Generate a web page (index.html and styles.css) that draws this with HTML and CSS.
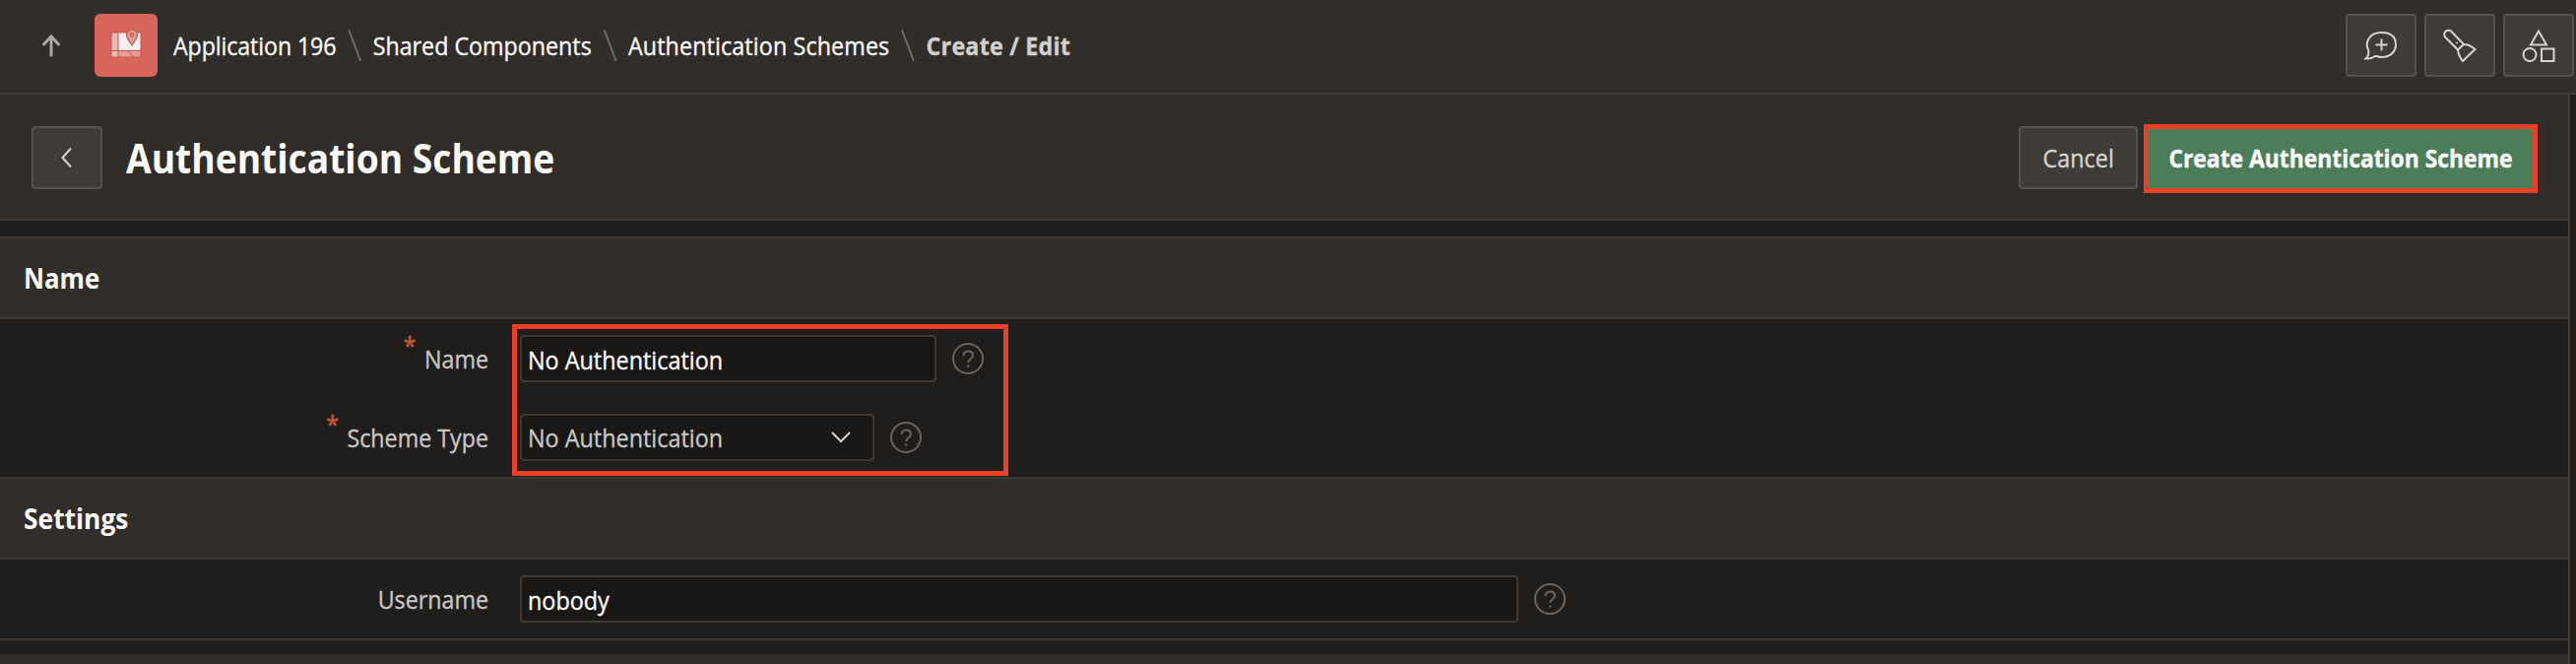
FILE: index.html
```html
<!DOCTYPE html>
<html lang="en">
<head>
<meta charset="utf-8">
<title>Authentication Scheme</title>
<link rel="stylesheet" href="styles.css">
</head>
<body>
<header class="topbar">
  <svg class="up" width="22" height="26" viewBox="0 0 22 26"><path d="M11 23V4M3.500 12L11 4l7.500 8"/></svg>
  <div class="app-icon">
    <svg width="34" height="36" viewBox="0 0 34 36">
      <path class="map-light" d="M2 8h30v25H2z"/>
      <path class="map-white" d="M9 8h23v18H9z"/>
      <path class="map-mid" d="M9 27h23v6H9z"/>
      <path class="map-line" d="M9 8v25M2 26.500h30M19 27l6 6M2 8h30v25H2z"/>
      <path class="pin" d="M23 21c-3-5-5.500-7.500-5.500-10.500a5.500 5.500 0 0 1 11 0C28.500 13.500 26 16 23 21z"/>
      <circle class="pin" cx="23" cy="10.500" r="1.800"/>
    </svg>
  </div>
  <nav class="crumbs">
    <a class="crumb-app">Application 196</a>
    <svg class="sep" width="16" height="34" viewBox="0 0 16 34"><path d="M1.500 1l13 32"/></svg>
    <a>Shared Components</a>
    <svg class="sep" width="16" height="34" viewBox="0 0 16 34"><path d="M1.500 1l13 32"/></svg>
    <a class="crumb-parent">Authentication Schemes</a>
    <svg class="sep" width="16" height="34" viewBox="0 0 16 34"><path d="M1.500 1l13 32"/></svg>
    <strong>Create / Edit</strong>
  </nav>
  <div class="tools">
    <button class="btn square"><svg width="36" height="36" viewBox="0 0 36 36"><path d="M5 22.500C1.500 15 6 5 18.500 5S33 12 33 17.500s-4 12.500-14.500 12.500c-2.500 0-4-.5-6-1.200C9.500 31 6.500 32 2.500 31.500c3-2.500 3.500-5 2.500-9zM18.500 11.500v12M12.500 17.500h12"/></svg></button>
    <button class="btn square"><svg width="36" height="36" viewBox="0 0 36 36"><path d="M3 9.500a4.300 4.300 0 0 1 7-5L22 17l-6 5.500zM22 17c5 0 8 2 11.500 5L21 34c-2.500-3-4.500-6-5-11.500"/><circle class="dot" cx="15" cy="15.500" r="1"/></svg></button>
    <button class="btn square"><svg width="36" height="36" viewBox="0 0 36 36"><path d="M18 3.500l8 14H10zM21 21.500h12.500V34H21z"/><circle cx="9" cy="27.500" r="6.500"/></svg></button>
  </div>
</header>
<main class="page">
  <section class="titlebar">
    <button class="btn square"><svg width="14" height="22" viewBox="0 0 14 22"><path d="M11 1.500L2.500 11l8.500 9.500"/></svg></button>
    <h1>Authentication Scheme</h1>
    <button class="btn cancel"><span class="narrow">Cancel</span></button>
    <button class="create"><span class="narrow">Create Authentication Scheme</span></button>
  </section>
  <section class="region first">
    <h2><span class="narrow">Name</span></h2>
    <div class="fields two">
      <label><span class="req">*</span>Name</label>
      <div class="control"><div class="input name"><span class="narrow">No Authentication</span></div><svg class="help" width="32" height="32" viewBox="0 0 32 32"><circle cx="16" cy="16" r="15"/><path d="M11.500 13c0-6 9.500-6 9.500-.5 0 4-4.700 3.500-4.700 7.500"/><circle class="dot" cx="16.200" cy="23.500" r="1.200"/></svg></div>
      <label><span class="req">*</span>Scheme Type</label>
      <div class="control"><div class="input select"><span class="narrow">No Authentication</span><svg width="20" height="12" viewBox="0 0 20 12"><path d="M1 1l9 9 9-9"/></svg></div><svg class="help" width="32" height="32" viewBox="0 0 32 32"><circle cx="16" cy="16" r="15"/><path d="M11.500 13c0-6 9.500-6 9.500-.5 0 4-4.700 3.500-4.700 7.500"/><circle class="dot" cx="16.200" cy="23.500" r="1.200"/></svg></div>
      <div class="highlight"></div>
    </div>
  </section>
  <section class="region">
    <h2><span class="narrow settings">Settings</span></h2>
    <div class="fields">
      <label>Username</label>
      <div class="control"><div class="input user"><span class="narrow">nobody</span></div><svg class="help" width="32" height="32" viewBox="0 0 32 32"><circle cx="16" cy="16" r="15"/><path d="M11.500 13c0-6 9.500-6 9.500-.5 0 4-4.700 3.500-4.700 7.500"/><circle class="dot" cx="16.200" cy="23.500" r="1.200"/></svg></div>
    </div>
  </section>
  <footer></footer>
</main>
</body>
</html>
```
FILE: styles.css
```css
* { box-sizing: border-box; }
body {
  margin: 0;
  height: 674px;
  overflow: hidden;
  background: #201e1c;
  color: #fcfbfa;
  font: 25px/34px "Open Sans", "Noto Sans", sans-serif;
  -webkit-text-stroke: .35px;
}
svg { display: block; fill: none; stroke: #d6d3d0; stroke-width: 2; flex: none; }
svg .dot { fill: currentColor; stroke: none; }
button { font: inherit; color: inherit; }
.narrow { display: inline-block; transform: scaleX(.935); transform-origin: left; }
.topbar {
  display: flex;
  align-items: center;
  height: 96px;
  padding: 0 2px 2px 41px;
  background: #312d2a;
  border-bottom: 2px solid #403c38;
}
.up { stroke: #aaa7a4; stroke-width: 3; stroke-linecap: round; }
.app-icon {
  display: grid;
  place-items: center;
  width: 64px;
  height: 64px;
  margin: 0 16px 0 33px;
  padding-bottom: 6px;
  border-radius: 6px;
  background: #d9655b;
}
.map-light { fill: #eab9b5; stroke: none; }
.map-white { fill: #f8eeed; stroke: none; }
.map-mid { fill: #e29e98; stroke: none; }
.map-line { stroke: #c4574e; stroke-width: 1; }
.pin { fill: #e29e98; stroke: #b9574f; stroke-width: 1.2; }
.crumbs {
  display: flex;
  align-items: center;
  white-space: nowrap;
  margin-top: -1px;
  transform: scaleX(.93);
  transform-origin: left;
}
.crumb-app { letter-spacing: -.13px; }
.crumb-parent { letter-spacing: .15px; }
.crumbs .sep { margin: 0 12px; stroke: #6e6a67; }
.crumbs strong { font-weight: 700; letter-spacing: .25px; color: #d2d0cd; }
.tools { display: flex; gap: 8px; margin-left: auto; }
.btn {
  display: grid;
  place-items: center;
  height: 64px;
  padding: 0;
  border: 2px solid #55514d;
  border-radius: 4px;
  background: #3f3b36;
  color: #d6d3d0;
}
.square { width: 72px; }
.page { width: 2610px; height: 578px; border-right: 2px solid #403c38; }
.titlebar {
  display: flex;
  align-items: center;
  height: 128px;
  padding: 2px 31px 0 32px;
  background: #312d2a;
  border-bottom: 2px solid #403c38;
}
h1 {
  margin: 0 auto 0 24px;
  font-size: 41px;
  font-weight: 700;
  line-height: 56px;
  -webkit-text-stroke: 0;
  transform: scaleX(.907);
  transform-origin: left;
}
.cancel { width: 121px; margin-right: 6px; padding-bottom: 1px; }
.cancel .narrow { transform-origin: center; }
.create {
  width: 400px;
  height: 70px;
  margin-top: 2px;
  padding: 0 0 3px;
  border: 5px solid #ec4127;
  background: #4b7e58;
  color: #fff;
  font-weight: 700;
  white-space: nowrap;
}
.create .narrow { transform: scaleX(.914); transform-origin: center; }
.first { margin-top: 16px; }
h2 {
  height: 84px;
  margin: 0;
  padding-left: 24px;
  background: #312d2a;
  border: solid #3d3a34;
  border-width: 2px 0;
  font-size: 29px;
  font-weight: 700;
  line-height: 80px;
  -webkit-text-stroke: 0;
}
h2 .narrow { transform: scaleX(.89); }
h2 .settings { transform: scaleX(.91); }
.fields {
  position: relative;
  display: grid;
  grid-template-columns: 496px 1fr;
  grid-auto-rows: 48px;
  column-gap: 32px;
  row-gap: 32px;
  height: 82px;
  padding-top: 16px;
  border-bottom: 2px solid #3d3a34;
}
.two { height: 160px; border: 0; }
label {
  display: flex;
  justify-content: flex-end;
  align-items: center;
  padding-bottom: 1px;
  color: #c8c6c4;
  transform: scaleX(.93);
  transform-origin: right;
}
.req { margin: -27px 9px 0 0; color: #c3523d; font-weight: 600; }
.control { display: flex; align-items: center; gap: 16px; }
.input {
  display: flex;
  align-items: center;
  justify-content: space-between;
  height: 48px;
  padding: 2px 22px 0 6px;
  border: 2px solid #3d3a34;
  border-radius: 4px;
  background: #191816;
  white-space: nowrap;
}
.name { width: 423px; }
.select { width: 360px; padding-top: 0; color: #c8c6c4; }
.user { width: 1014px; }
.help { stroke: #686562; color: #686562; }
.highlight {
  position: absolute;
  left: 520px;
  top: 5px;
  width: 504px;
  height: 154px;
  border: 5px solid #ec4127;
}
footer { height: 10px; margin-top: 14px; background: #312d2a; }
```
